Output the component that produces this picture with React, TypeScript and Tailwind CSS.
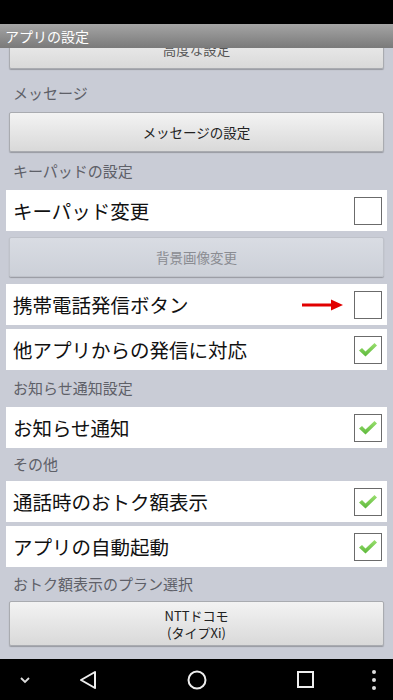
const font = "font-['Noto_Sans_CJK_JP','Noto_Sans',sans-serif]";

function CheckBox({ checked }: { checked: boolean }) {
  return (
    <div className="flex h-[28px] w-[28px] items-center justify-center border border-[#6b6b6b] bg-white">
      {checked && (
        <svg width="22" height="18" viewBox="0 0 22 18">
          <defs>
            <linearGradient id="chk" x1="0" y1="0" x2="0" y2="1">
              <stop offset="0" stopColor="#9be070" />
              <stop offset="1" stopColor="#5cb83a" />
            </linearGradient>
          </defs>
          <path d="M2 9.5 L5 7 L8.5 10.5 L17.5 2 L20 4.5 L8.5 15.5 Z" fill="url(#chk)" />
        </svg>
      )}
    </div>
  );
}

function SectionLabel({ text, h }: { text: string; h: string }) {
  return <div className={`flex ${h} items-center px-[13px] text-[15px] text-[#5e6068]`}>{text}</div>;
}

function CheckRow({ label, checked, arrow }: { label: string; checked: boolean; arrow?: boolean }) {
  return (
    <div className="mx-[6px] flex h-[41px] items-center justify-between bg-white pl-[7px] pr-[5px]">
      <span className="text-[19.5px] leading-none text-[#111]">{label}</span>
      <div className="flex items-center gap-[11px]">
        {arrow && (
          <svg width="41" height="12" viewBox="0 0 41 12">
            <path d="M0 6 H32" stroke="#e10000" strokeWidth="3" />
            <path d="M29 0.5 L41 6 L29 11.5 Z" fill="#e10000" />
          </svg>
        )}
        <CheckBox checked={checked} />
      </div>
    </div>
  );
}

function Button({ children, disabled, tall }: { children: React.ReactNode; disabled?: boolean; tall?: boolean }) {
  return (
    <div
      className={`mx-[9px] flex items-center justify-center rounded-[2px] border text-center shadow-[0_1px_1px_rgba(0,0,0,0.25)] ${
        tall ? "h-[45px]" : "h-[40px]"
      } ${
        disabled
          ? "border-[#bfc2ca] bg-gradient-to-b from-[#d9dce3] to-[#ccd0d8] text-[13.5px] text-[#8a8c92]"
          : "border-[#a9abb0] bg-gradient-to-b from-[#f3f3f3] to-[#d9d9d9] text-[13.5px] text-[#222]"
      }`}
    >
      {children}
    </div>
  );
}

export default function App() {
  return (
    <div className={`${font} relative h-[700px] w-[393px] overflow-hidden bg-[#c9ccd6]`}>
      <div className="h-[24px] bg-black" />
      <div className="flex h-[24px] items-center bg-gradient-to-b from-[#a5a5a5] to-[#7a7a7a] px-[5px] text-[14px] text-white">
        アプリの設定
      </div>

      {/* scrolled: only the lower part of this button is visible */}
      <div className="h-[26px] overflow-hidden">
        <div className="-mt-[19px]">
          <Button>
            <span className="text-[#555]">高度な設定</span>
          </Button>
        </div>
      </div>

      <SectionLabel text="メッセージ" h="h-[38px]" />
      <Button>メッセージの設定</Button>
      <SectionLabel text="キーパッドの設定" h="h-[38px]" />
      <CheckRow label="キーパッド変更" checked={false} />
      <div className="h-[6px]" />
      <Button disabled>背景画像変更</Button>
      <div className="h-[7px]" />
      <CheckRow label="携帯電話発信ボタン" checked={false} arrow />
      <div className="h-[4px]" />
      <CheckRow label="他アプリからの発信に対応" checked />
      <SectionLabel text="お知らせ通知設定" h="h-[37px]" />
      <CheckRow label="お知らせ通知" checked />
      <SectionLabel text="その他" h="h-[33px]" />
      <CheckRow label="通話時のおトク額表示" checked />
      <div className="h-[4px]" />
      <CheckRow label="アプリの自動起動" checked />
      <SectionLabel text="おトク額表示のプラン選択" h="h-[34px]" />
      <Button tall>
        <div className="text-[13px] leading-[17px]">
          NTTドコモ
          <br />
          (タイプXi)
        </div>
      </Button>

      <div className="absolute bottom-0 left-0 h-[41px] w-[393px] bg-black">
        <svg className="absolute left-[19px] top-[17px]" width="12" height="8" viewBox="0 0 12 8">
          <path d="M2 2 L6 6 L10 2" stroke="#ddd" strokeWidth="1.8" fill="none" />
        </svg>
        <svg className="absolute left-[79px] top-[11px]" width="18" height="20" viewBox="0 0 18 20">
          <path d="M16 2 L2 10 L16 18 Z" stroke="#eee" strokeWidth="2" fill="none" strokeLinejoin="round" />
        </svg>
        <svg className="absolute left-[186px] top-[10px]" width="22" height="22" viewBox="0 0 22 22">
          <circle cx="11" cy="11" r="8.5" stroke="#eee" strokeWidth="2" fill="none" />
        </svg>
        <svg className="absolute left-[296px] top-[11px]" width="20" height="20" viewBox="0 0 20 20">
          <rect x="2" y="2" width="15" height="15" stroke="#eee" strokeWidth="2" fill="none" />
        </svg>
        <svg className="absolute left-[370px] top-[10px]" width="8" height="22" viewBox="0 0 8 22">
          <circle cx="4" cy="3" r="2" fill="#ddd" />
          <circle cx="4" cy="11" r="2" fill="#ddd" />
          <circle cx="4" cy="19" r="2" fill="#ddd" />
        </svg>
      </div>
    </div>
  );
}
